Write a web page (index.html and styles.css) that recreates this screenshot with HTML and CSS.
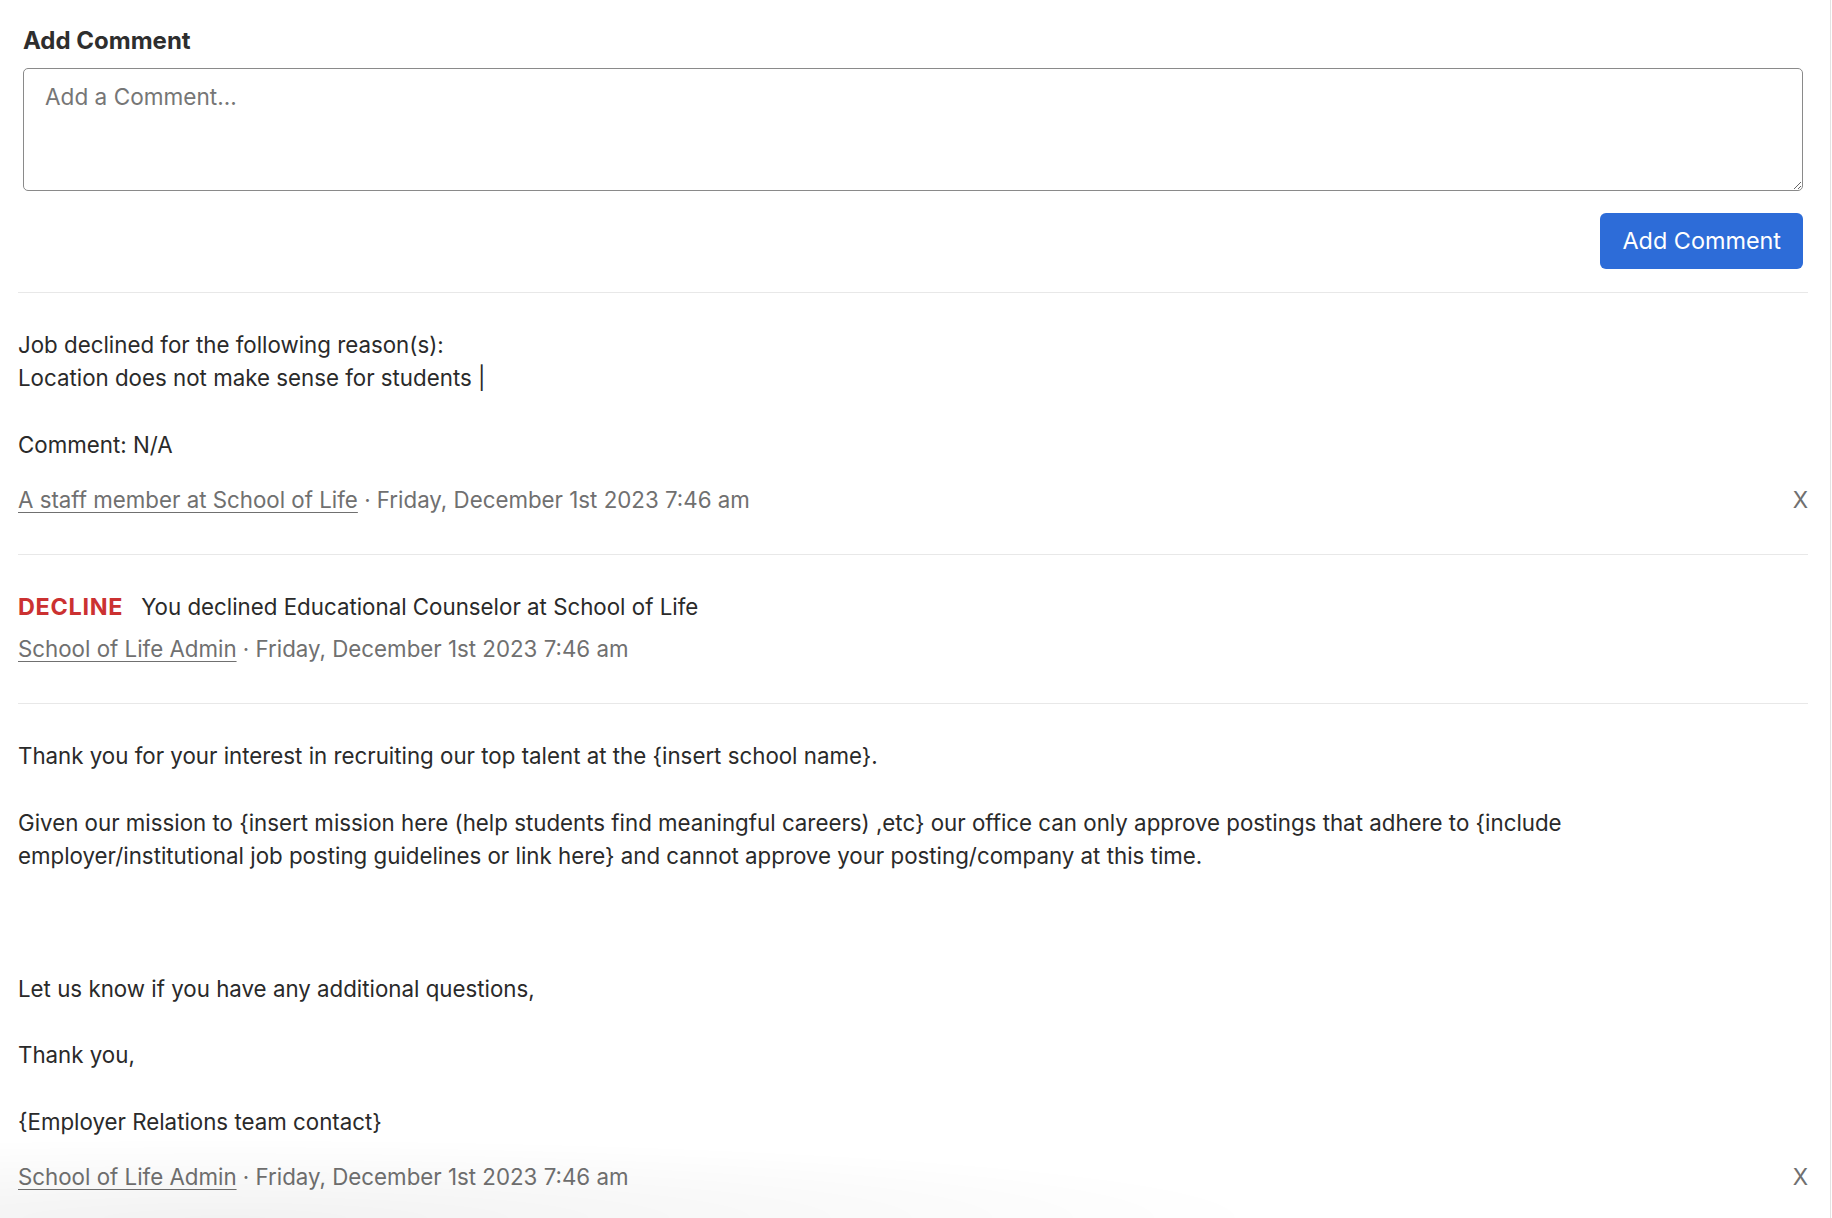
FILE: index.html
```html
<!DOCTYPE html>
<html lang="en">
<head>
<meta charset="utf-8">
<title>Comments</title>
<link rel="stylesheet" href="styles.css">
</head>
<body>
<div class="wrap">
  <section class="composer">
    <h2 class="composer-title">Add Comment</h2>
    <textarea class="composer-input" placeholder="Add a Comment..."></textarea>
    <div class="composer-actions">
      <button class="btn-primary" type="button">Add Comment</button>
    </div>
  </section>

  <ul class="feed">
    <li class="feed-item">
      <div class="feed-body">Job declined for the following reason(s):<br>Location does not make sense for students |<br><br>Comment: N/A</div>
      <div class="feed-meta">
        <span class="meta-text"><a class="meta-link" href="#">A staff member at School of Life</a> · Friday, December 1st 2023 7:46 am</span>
        <button class="close-btn" type="button">X</button>
      </div>
    </li>

    <li class="feed-item">
      <div class="activity-line"><span class="status-decline">DECLINE</span><span class="activity-text">You declined Educational Counselor at School of Life</span></div>
      <div class="feed-meta activity-meta">
        <span class="meta-text"><a class="meta-link" href="#">School of Life Admin</a> · Friday, December 1st 2023 7:46 am</span>
      </div>
    </li>

    <li class="feed-item">
      <div class="feed-body">Thank you for your interest in recruiting our top talent at the {insert school name}.<br><br>Given our mission to {insert mission here (help students find meaningful careers) ,etc} our office can only approve postings that adhere to {include<br>employer/institutional job posting guidelines or link here} and cannot approve your posting/company at this time.<br><br><br><br>Let us know if you have any additional questions,<br><br>Thank you,<br><br>{Employer Relations team contact}</div>
      <div class="feed-meta">
        <span class="meta-text"><a class="meta-link" href="#">School of Life Admin</a> · Friday, December 1st 2023 7:46 am</span>
        <button class="close-btn" type="button">X</button>
      </div>
    </li>
  </ul>
</div>
</body>
</html>
```

FILE: styles.css
```css
* {
  box-sizing: border-box;
}

html, body {
  margin: 0;
  padding: 0;
  background: #ffffff;
}

body {
  font-family: "Inter", "Noto Sans", "Liberation Sans", sans-serif;
  color: #2a2a2a;
  overflow: hidden;
}

body::after {
  content: "";
  position: fixed;
  left: 0;
  bottom: 0;
  width: 1500px;
  height: 80px;
  pointer-events: none;
  background: radial-gradient(ellipse 70% 100% at 15% 100%, rgba(0, 0, 0, 0.05), rgba(0, 0, 0, 0) 100%);
}

.wrap {
  width: 1831px;
  min-height: 100vh;
  border-right: 1px solid #e3e3e3;
}

/* Composer */
.composer {
  padding: 26px 27px 23px 23px;
}

.composer-title {
  margin: 0 0 12px;
  font-size: 24px;
  line-height: 30px;
  font-weight: 700;
  color: #2e2e2e;
}

.composer-input {
  display: block;
  width: 100%;
  height: 123px;
  margin: 0;
  padding: 12px 21px;
  border: 1px solid #8a8a8a;
  border-radius: 5px;
  font-family: "Inter", "Noto Sans", "Liberation Sans", sans-serif;
  font-size: 22.6px;
  line-height: 32px;
  color: #2a2a2a;
  resize: vertical;
  outline: none;
}

.composer-input::placeholder {
  color: #767676;
}

.composer-actions {
  display: flex;
  justify-content: flex-end;
  margin-top: 22px;
}

.btn-primary {
  height: 56px;
  padding: 0 22px;
  border: none;
  border-radius: 6px;
  background: #2d6cd8;
  color: #ffffff;
  font-family: "Inter", "Noto Sans", "Liberation Sans", sans-serif;
  font-size: 23.4px;
  line-height: 56px;
  cursor: pointer;
}

/* Feed */
.feed {
  list-style: none;
  margin: 0;
  padding: 0 22px 0 18px;
}

.feed-item {
  border-top: 1px solid #e8e8e8;
  padding: 35px 0 38px;
}

.feed-body,
.activity-line,
.feed-meta {
  font-size: 22.3px;
  line-height: 33.2px;
}

.feed-body {
  color: #2a2a2a;
}

.feed-meta {
  display: flex;
  justify-content: space-between;
  align-items: center;
  margin-top: 22px;
  color: #707070;
}

.activity-meta {
  margin-top: 9px;
}

.meta-link {
  color: #707070;
  text-decoration: underline;
  text-underline-offset: 4px;
  text-decoration-thickness: 1px;
}

.close-btn {
  padding: 0;
  border: none;
  background: none;
  color: #707070;
  font-family: "Inter", "Noto Sans", "Liberation Sans", sans-serif;
  font-size: 22.5px;
  line-height: 33px;
  cursor: pointer;
}

.activity-line {
  display: flex;
  align-items: baseline;
  gap: 18px;
}

.status-decline {
  color: #cb3131;
  font-weight: 700;
  font-size: 23.4px;
  letter-spacing: 0.03em;
}

.activity-text {
  color: #2a2a2a;
}
```
